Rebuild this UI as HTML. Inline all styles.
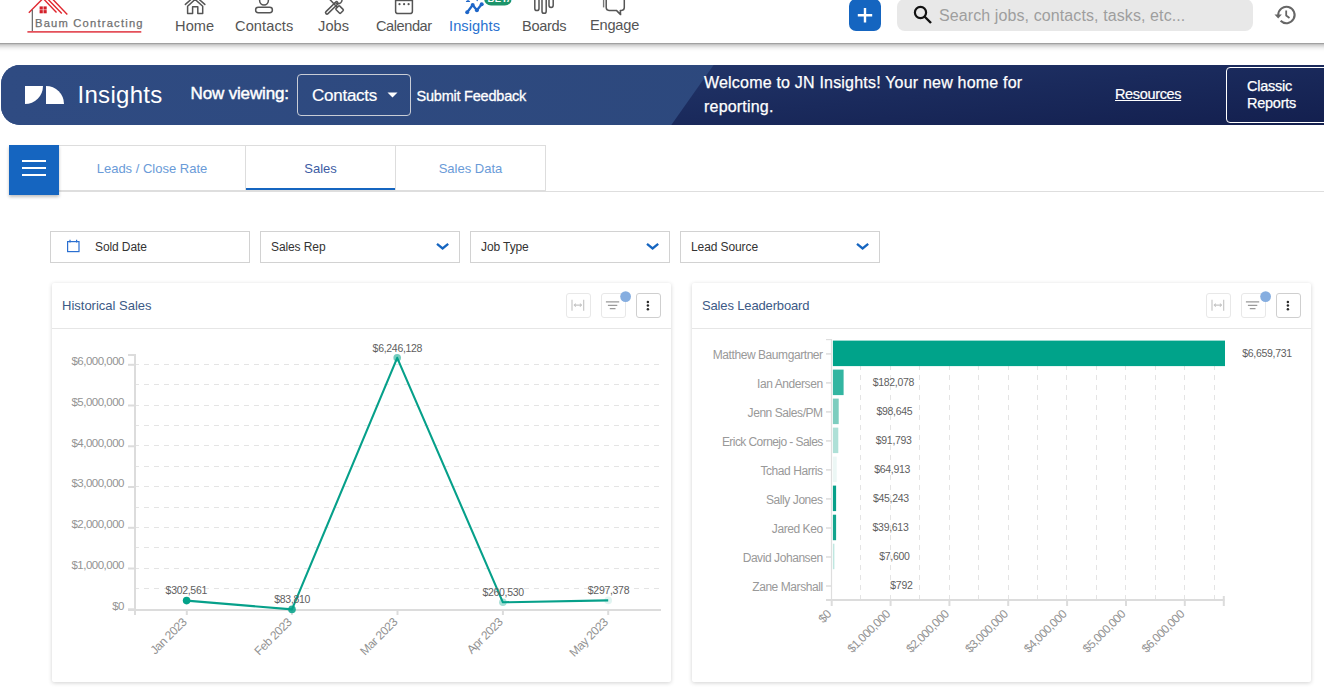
<!DOCTYPE html>
<html><head><meta charset="utf-8">
<style>
*{box-sizing:border-box;margin:0;padding:0}
html,body{width:1324px;height:700px;overflow:hidden;background:#fff;font-family:"Liberation Sans",sans-serif}
.abs{position:absolute}
#hdr{position:absolute;left:0;top:0;width:1324px;height:43px;background:#fff;z-index:5}
#hshadow{position:absolute;left:-20px;top:0;width:1364px;height:43px;background:#fff;box-shadow:0 2px 6px rgba(0,0,0,.38),0 1px 1px rgba(0,0,0,.15);z-index:4}
.nav{position:absolute;top:17.5px;font-size:14.6px;color:#555;white-space:nowrap;letter-spacing:0.1px}
#banner{position:absolute;left:1px;top:65px;width:1340px;height:60px;border-radius:19px 0 0 19px;overflow:hidden;background:linear-gradient(90deg,#2f4b82 0%,#2c467c 100%)}
#tabs{position:absolute;left:0;top:145px;width:1324px;height:47px}
.tab{position:absolute;top:145px;height:46px;border:1px solid #ddd;border-bottom:none;font-size:13px;text-align:center;line-height:46px;color:#6a9bd8}
.filt{position:absolute;top:231px;width:200px;height:32px;border:1px solid #d2d2d2;font-size:12px;color:#333;line-height:31px;padding-left:10px;letter-spacing:-0.1px}
.card{position:absolute;top:283px;height:399px;width:619px;background:#fff;border-radius:2px;box-shadow:0 1px 4px rgba(0,0,0,.18)}
.ctitle{position:absolute;left:10px;top:15px;font-size:13px;color:#3c5a86}
.cdiv{position:absolute;left:0;top:45px;width:100%;height:1px;background:#e6e6e6}
.ib{position:absolute;top:10.3px;width:24.5px;height:24.5px;border:1px solid #e8e8e8;border-radius:3px;background:#fff}
</style></head><body>

<!-- HEADER -->
<div id="hshadow"></div>
<div id="hdr">
  <!-- logo -->
  <svg class="abs" style="left:0;top:0" width="160" height="43" viewBox="0 0 160 43">
    <g stroke="#e0262e" stroke-width="1.4" fill="none">
      <path d="M28.8 12.8 L42.5 -1"/>
      <path d="M43 -1.7 L56.5 12.5"/>
      <path d="M47.2 -1.5 L61.8 13.4"/>
      <path d="M52 -1.5 L67.3 14.6"/>
    </g>
    <g fill="#d4202a"><rect x="39.6" y="6.4" width="3.2" height="3.2"/><rect x="43.5" y="6.4" width="3.2" height="3.2"/><rect x="39.6" y="10.1" width="3.2" height="3.2"/><rect x="43.5" y="10.1" width="3.2" height="3.2"/></g>
    <path d="M32.3 9.8 V31.4" stroke="#555" stroke-width="1.1"/>
    <path d="M27.4 31.9 H141.3" stroke="#e4505a" stroke-width="1.7"/>
    <text x="35" y="26.6" font-size="11.2" fill="#707070" stroke="#707070" stroke-width="0.25" font-family="Liberation Sans" letter-spacing="1.2">Baum Contracting</text>
  </svg>

  <!-- nav icons -->
  <svg class="abs" style="left:0;top:0" width="700" height="43" viewBox="0 0 700 43">
    <g fill="none" stroke="#555" stroke-width="1.5" stroke-linejoin="round" stroke-linecap="round">
      <!-- home -->
      <path d="M185.4 4.4 L195.1 -4.2 L204.8 4.4"/>
      <path d="M187.6 13.5 V6.2 L195.1 -0.6 L202.7 6.2 V13.5 H197.8 V6.8 H192.6 V13.5 Z"/>
      <!-- contacts -->
      <circle cx="264" cy="0.6" r="4.4"/>
      <rect x="255.6" y="7.3" width="16.8" height="5.4" rx="2.7"/>
      <!-- calendar -->
      <rect x="395.6" y="-4" width="16.8" height="17.6" rx="2.4"/>
    </g>
    <!-- jobs -->
    <g stroke-linecap="round" stroke-linejoin="round">
      <path d="M327 12.6 L336.6 3.2" stroke="#555" stroke-width="4.4"/>
      <path d="M327 12.6 L336.6 3.2" stroke="#fff" stroke-width="1.3"/>
      <path d="M335.2 2.5 A3.6 3.6 0 1 0 341 -2.8" fill="none" stroke="#555" stroke-width="1.5"/>
      <path d="M327 -3.5 L336.5 6.5" stroke="#555" stroke-width="1.5"/>
      <rect x="-2.6" y="-3.3" width="5.2" height="6.6" rx="1" transform="translate(339.6 9.6) rotate(-45)" fill="#fff" stroke="#555" stroke-width="1.5"/>
    </g>
    <g fill="#555"><rect x="395.6" y="-4" width="16.8" height="5.2"/><circle cx="399.5" cy="4.2" r="1.1"/><circle cx="404.1" cy="4.2" r="1.1"/><circle cx="408.6" cy="4.2" r="1.1"/></g>
    <!-- insights -->
    <g stroke="#1e66c8" stroke-width="2.3" fill="none" stroke-linecap="round" stroke-linejoin="round">
      <path d="M467.2 12.2 L472.7 5 L476.9 10.3 L481.7 4.2"/>
      <path d="M468 1.3 L468 -2 M466.5 1.3 L469.5 1.3 M477.2 0.5 L477.2 -2" stroke-width="1.3"/>
    </g>
    <g fill="#1e66c8"><circle cx="467.2" cy="12.2" r="2"/><circle cx="472.7" cy="5" r="2"/><circle cx="476.9" cy="10.3" r="2"/><circle cx="481.7" cy="4.2" r="2"/></g>
    <rect x="484.1" y="-9" width="27.7" height="14.6" rx="7" fill="#1c946a"/>
    <text x="487.6" y="1.9" font-size="9.5" font-weight="bold" fill="#fff" font-family="Liberation Sans" letter-spacing="0.3">BETA</text>
    <!-- boards -->
    <g fill="none" stroke="#555" stroke-width="1.5">
      <rect x="534.8" y="-4" width="4.2" height="14.5" rx="2.1"/>
      <rect x="542" y="-4" width="4.2" height="17.3" rx="2.1"/>
      <rect x="549" y="-4" width="4.2" height="11.4" rx="2.1"/>
    </g>
    <!-- engage -->
    <g fill="none" stroke="#555" stroke-width="1.5" stroke-linejoin="round">
      <path d="M609 -3 H621.5 Q624.3 -3 624.3 0 V7.6 Q624.3 10.4 621.5 10.4 L620.3 10.4 L620.6 14.6 L616.4 10.4 H609 Q606.2 10.4 606.2 7.6 V0 Q606.2 -3 609 -3 Z"/>
      <path d="M603.6 -1 V7.4" stroke-width="1.4" stroke="#777"/>
    </g>
  </svg>
  <div class="nav" style="left:175px">Home</div>
  <div class="nav" style="left:235px">Contacts</div>
  <div class="nav" style="left:318px">Jobs</div>
  <div class="nav" style="left:376px;letter-spacing:-0.45px">Calendar</div>
  <div class="nav" style="left:449px;color:#2a72d0">Insights</div>
  <div class="nav" style="left:522px;letter-spacing:-0.35px">Boards</div>
  <div class="nav" style="left:590px;top:16.8px;letter-spacing:-0.2px">Engage</div>

  <!-- plus -->
  <div class="abs" style="left:849px;top:-1px;width:32px;height:32px;border-radius:7px;background:#1565c0"></div>
  <svg class="abs" style="left:849px;top:0" width="32" height="31"><path d="M16 8 V22.5 M8.8 15.2 H23.2" stroke="#fff" stroke-width="2.4"/></svg>
  <!-- search -->
  <div class="abs" style="left:897px;top:-1px;width:356px;height:32px;border-radius:8px;background:#e8e8e8"></div>
  <svg class="abs" style="left:912px;top:4px" width="22" height="22" viewBox="0 0 22 22"><circle cx="8.5" cy="8.5" r="5.6" fill="none" stroke="#111" stroke-width="2.2"/><path d="M12.5 12.5 L19 19" stroke="#111" stroke-width="2.4"/></svg>
  <div class="abs" style="left:939px;top:7px;font-size:16px;color:#9e9e9e;white-space:nowrap;letter-spacing:0.1px">Search jobs, contacts, tasks, etc...</div>
  <!-- history -->
  <svg class="abs" style="left:1272px;top:4px" width="26" height="22" viewBox="0 0 26 22">
    <path d="M6.2 11 A8.2 8.2 0 1 1 8.6 16.8" fill="none" stroke="#666" stroke-width="2"/>
    <path d="M2.5 10.5 L6.2 14.6 L9.8 10.5 Z" fill="#666"/>
    <path d="M14.2 6.5 V11.5 L17.5 14" fill="none" stroke="#666" stroke-width="1.8"/>
  </svg>
</div>

<!-- BANNER -->
<div id="banner">
  <svg class="abs" style="left:0;top:0" width="1340" height="60">
    <defs>
      <linearGradient id="g1" x1="0" y1="0" x2="1" y2="0">
        <stop offset="0" stop-color="#2f4b82"/><stop offset="1" stop-color="#2b4679"/>
      </linearGradient>
      <linearGradient id="g2" x1="0" y1="0" x2="1" y2="1">
        <stop offset="0" stop-color="#213468"/><stop offset="0.45" stop-color="#1a2a5c"/><stop offset="1" stop-color="#131f4e"/>
      </linearGradient>
    </defs>
    <rect x="0" y="0" width="1340" height="60" fill="url(#g1)"/>
    <path d="M712.6 0 H1340 V60 H670.3 Z" fill="url(#g2)"/>
  </svg>
  <!-- logo shapes -->
  <svg class="abs" style="left:24px;top:21px" width="40" height="18" viewBox="0 0 40 18">
    <path d="M0 0 H18 A18 18 0 0 1 0 18 Z" fill="#fff"/>
    <path d="M21 0 A18 18 0 0 1 39 18 H21 Z" fill="#fff"/>
  </svg>
  <div class="abs" style="left:76.5px;top:15.5px;font-size:24px;color:#fff;letter-spacing:0.3px">Insights</div>
  <div class="abs" style="left:189.5px;top:19px;font-size:17px;color:#fff;letter-spacing:-0.15px;-webkit-text-stroke:0.45px #fff">Now viewing:</div>
  <div class="abs" style="left:296px;top:9px;width:114px;height:42px;border:1px solid #c9cdd6;border-radius:4px"></div>
  <div class="abs" style="left:311px;top:21px;font-size:17px;color:#fff;letter-spacing:-0.25px;-webkit-text-stroke:0.2px #fff">Contacts</div>
  <svg class="abs" style="left:386px;top:27px" width="12" height="8"><path d="M0.5 0.5 H10.5 L5.5 5.5 Z" fill="#fff"/></svg>
  <div class="abs" style="left:415.5px;top:23px;font-size:14.5px;color:#fff;letter-spacing:-0.22px;-webkit-text-stroke:0.3px #fff">Submit Feedback</div>
  <div class="abs" style="left:703px;top:6px;font-size:16px;line-height:24px;color:#fff;width:348px;letter-spacing:0.2px;-webkit-text-stroke:0.25px #fff">Welcome to JN Insights! Your new home for reporting.</div>
  <div class="abs" style="left:1114px;top:21px;font-size:14.5px;color:#fff;text-decoration:underline;letter-spacing:-0.35px;-webkit-text-stroke:0.2px #fff">Resources</div>
  <div class="abs" style="left:1225px;top:2px;width:120px;height:56px;border:1px solid #fff;border-radius:4px"></div>
  <div class="abs" style="left:1246px;top:13px;font-size:14.5px;line-height:17px;color:#fff;letter-spacing:-0.25px;-webkit-text-stroke:0.25px #fff">Classic<br>Reports</div>
</div>

<!-- TABS -->
<div class="abs" style="left:59px;top:190px;width:487px;height:2px;background:#dedede"></div>
<div class="abs" style="left:546px;top:191px;width:778px;height:1px;background:#dedede"></div>
<div class="tab" style="left:58px;width:188px">Leads / Close Rate</div>
<div class="tab" style="left:245px;width:151px;color:#3d5ca4">Sales</div>
<div class="abs" style="left:246px;top:188px;width:149px;height:2.2px;background:#1565c0"></div>
<div class="tab" style="left:395px;width:151px">Sales Data</div>
<div class="abs" style="left:9px;top:145px;width:50px;height:50px;background:#1565c0;box-shadow:0 2px 3px rgba(0,0,0,.25)"></div>
<svg class="abs" style="left:9px;top:145px" width="50" height="50"><path d="M13 16 H37 M13 23 H37 M13 30 H37" stroke="#fff" stroke-width="2.2"/></svg>

<!-- FILTERS -->
<div class="filt" style="left:50px;padding-left:44px">Sold Date</div>
<svg class="abs" style="left:66px;top:239px" width="15" height="14" viewBox="0 0 15 14"><rect x="1.6" y="2.6" width="11.4" height="10" fill="none" stroke="#2a6fd0" stroke-width="1.2"/><path d="M4 0.8 V3.5 M10.6 0.8 V3.5" stroke="#2a6fd0" stroke-width="1.2"/></svg>
<div class="filt" style="left:260px">Sales Rep</div>
<div class="filt" style="left:470px">Job Type</div>
<div class="filt" style="left:680px">Lead Source</div>
<svg class="abs" style="left:0;top:0" width="900" height="270">
  <g fill="none" stroke="#1565c0" stroke-width="2.3">
    <path d="M437 243.8 L442.6 248.4 L448.2 243.8"/>
    <path d="M647 243.8 L652.6 248.4 L658.2 243.8"/>
    <path d="M857 243.8 L862.6 248.4 L868.2 243.8"/>
  </g>
</svg>

<!-- CARDS -->
<div class="card" style="left:52px">
  <div class="ctitle">Historical Sales</div>
  <div class="ib" style="left:514.3px"></div>
  <div class="ib" style="left:549.4px"></div>
  <div class="ib" style="left:584.4px;border-color:#cfcfcf"></div>
  <svg class="abs" style="left:0;top:0" width="619" height="46">
    <g stroke="#c4c4c4" stroke-width="1.1" fill="none">
      <path d="M520 16.8 V27.8 M531.7 16.8 V27.8 M522.3 22.1 H529.4"/>
      <path d="M523.8 20.6 L522.3 22.1 L523.8 23.6 M527.9 20.6 L529.4 22.1 L527.9 23.6"/>
    </g>
    <g stroke="#9a9a9a" stroke-width="1.2">
      <path d="M553.9 18.8 H567.2 M555.9 22.4 H565.3 M557.8 25.6 H563.5"/>
    </g>
    <circle cx="573.6" cy="13.6" r="5.4" fill="#86aee0"/>
    <g fill="#2a2a2a"><circle cx="595.9" cy="19" r="1.25"/><circle cx="595.9" cy="22.6" r="1.25"/><circle cx="595.9" cy="26.2" r="1.25"/></g>
  </svg>
  <div class="cdiv"></div>
</div>
<div class="card" style="left:692px">
  <div class="ctitle" style="letter-spacing:-0.15px">Sales Leaderboard</div>
  <div class="ib" style="left:514.3px"></div>
  <div class="ib" style="left:549.4px"></div>
  <div class="ib" style="left:584.4px;border-color:#cfcfcf"></div>
  <svg class="abs" style="left:0;top:0" width="619" height="46">
    <g stroke="#c4c4c4" stroke-width="1.1" fill="none">
      <path d="M520 16.8 V27.8 M531.7 16.8 V27.8 M522.3 22.1 H529.4"/>
      <path d="M523.8 20.6 L522.3 22.1 L523.8 23.6 M527.9 20.6 L529.4 22.1 L527.9 23.6"/>
    </g>
    <g stroke="#9a9a9a" stroke-width="1.2">
      <path d="M553.9 18.8 H567.2 M555.9 22.4 H565.3 M557.8 25.6 H563.5"/>
    </g>
    <circle cx="573.6" cy="13.6" r="5.4" fill="#86aee0"/>
    <g fill="#2a2a2a"><circle cx="595.9" cy="19" r="1.25"/><circle cx="595.9" cy="22.6" r="1.25"/><circle cx="595.9" cy="26.2" r="1.25"/></g>
  </svg>
  <div class="cdiv"></div>
</div>

<!--CHARTS-->
<svg class="abs" style="left:0;top:0;z-index:2" width="1324" height="700">
<path d="M134 588.5 H660" stroke="#e4e4e4" stroke-width="1" stroke-dasharray="5 5"/>
<path d="M134 568.5 H660" stroke="#e4e4e4" stroke-width="1" stroke-dasharray="5 5"/>
<path d="M134 547.5 H660" stroke="#e4e4e4" stroke-width="1" stroke-dasharray="5 5"/>
<path d="M134 527.5 H660" stroke="#e4e4e4" stroke-width="1" stroke-dasharray="5 5"/>
<path d="M134 507.5 H660" stroke="#e4e4e4" stroke-width="1" stroke-dasharray="5 5"/>
<path d="M134 486.5 H660" stroke="#e4e4e4" stroke-width="1" stroke-dasharray="5 5"/>
<path d="M134 466.5 H660" stroke="#e4e4e4" stroke-width="1" stroke-dasharray="5 5"/>
<path d="M134 445.5 H660" stroke="#e4e4e4" stroke-width="1" stroke-dasharray="5 5"/>
<path d="M134 425.5 H660" stroke="#e4e4e4" stroke-width="1" stroke-dasharray="5 5"/>
<path d="M134 405.5 H660" stroke="#e4e4e4" stroke-width="1" stroke-dasharray="5 5"/>
<path d="M134 384.5 H660" stroke="#e4e4e4" stroke-width="1" stroke-dasharray="5 5"/>
<path d="M134 364.5 H660" stroke="#e4e4e4" stroke-width="1" stroke-dasharray="5 5"/>
<path d="M135 354 V611" stroke="#dcdcdc" stroke-width="2"/>
<path d="M128 355 H136" stroke="#dcdcdc" stroke-width="2"/>
<path d="M128 609.3 H135" stroke="#dcdcdc" stroke-width="2"/>
<text x="124" y="609.5" text-anchor="end" font-size="11.5" fill="#939393" letter-spacing="-0.5" font-family="Liberation Sans">$0</text>
<path d="M128 568.5 H135" stroke="#dcdcdc" stroke-width="2"/>
<text x="124" y="568.8" text-anchor="end" font-size="11.5" fill="#939393" letter-spacing="-0.5" font-family="Liberation Sans">$1,000,000</text>
<path d="M128 527.8 H135" stroke="#dcdcdc" stroke-width="2"/>
<text x="124" y="528.0" text-anchor="end" font-size="11.5" fill="#939393" letter-spacing="-0.5" font-family="Liberation Sans">$2,000,000</text>
<path d="M128 487.0 H135" stroke="#dcdcdc" stroke-width="2"/>
<text x="124" y="487.2" text-anchor="end" font-size="11.5" fill="#939393" letter-spacing="-0.5" font-family="Liberation Sans">$3,000,000</text>
<path d="M128 446.3 H135" stroke="#dcdcdc" stroke-width="2"/>
<text x="124" y="446.5" text-anchor="end" font-size="11.5" fill="#939393" letter-spacing="-0.5" font-family="Liberation Sans">$4,000,000</text>
<path d="M128 405.5 H135" stroke="#dcdcdc" stroke-width="2"/>
<text x="124" y="405.7" text-anchor="end" font-size="11.5" fill="#939393" letter-spacing="-0.5" font-family="Liberation Sans">$5,000,000</text>
<path d="M128 364.8 H135" stroke="#dcdcdc" stroke-width="2"/>
<text x="124" y="365.0" text-anchor="end" font-size="11.5" fill="#939393" letter-spacing="-0.5" font-family="Liberation Sans">$6,000,000</text>
<path d="M128 610 H661" stroke="#dcdcdc" stroke-width="2"/>
<path d="M135 610 V615" stroke="#dcdcdc" stroke-width="2"/>
<path d="M186.8 610 V615" stroke="#dcdcdc" stroke-width="2"/>
<path d="M291.9 610 V615" stroke="#dcdcdc" stroke-width="2"/>
<path d="M397.5 610 V615" stroke="#dcdcdc" stroke-width="2"/>
<path d="M502.9 610 V615" stroke="#dcdcdc" stroke-width="2"/>
<path d="M608.2 610 V615" stroke="#dcdcdc" stroke-width="2"/>
<text x="187.3" y="623" text-anchor="end" font-size="12" fill="#939393" letter-spacing="-0.5" transform="rotate(-45 187.3 623)" font-family="Liberation Sans">Jan 2023</text>
<text x="292.4" y="623" text-anchor="end" font-size="12" fill="#939393" letter-spacing="-0.5" transform="rotate(-45 292.4 623)" font-family="Liberation Sans">Feb 2023</text>
<text x="398.0" y="623" text-anchor="end" font-size="12" fill="#939393" letter-spacing="-0.5" transform="rotate(-45 398.0 623)" font-family="Liberation Sans">Mar 2023</text>
<text x="503.4" y="623" text-anchor="end" font-size="12" fill="#939393" letter-spacing="-0.5" transform="rotate(-45 503.4 623)" font-family="Liberation Sans">Apr 2023</text>
<text x="608.7" y="623" text-anchor="end" font-size="12" fill="#939393" letter-spacing="-0.5" transform="rotate(-45 608.7 623)" font-family="Liberation Sans">May 2023</text>
<path d="M186.6 600.6 L292 609.4 L397.2 357.8 L502.9 602.3 L608.2 600.4" fill="none" stroke="#06a08a" stroke-width="2.1" stroke-linejoin="round"/>
<circle cx="186.6" cy="600.6" r="3.8" fill="#03a289" fill-opacity="1"/>
<circle cx="292" cy="609.4" r="3.8" fill="#03a289" fill-opacity="0.85"/>
<circle cx="397.2" cy="357.8" r="3.8" fill="#03a289" fill-opacity="0.55"/>
<circle cx="502.9" cy="602.3" r="3.8" fill="#03a289" fill-opacity="0.35"/>
<circle cx="608.2" cy="600.4" r="3.8" fill="#03a289" fill-opacity="0.12"/>
<text x="186.3" y="594.2" text-anchor="middle" font-size="10.5" fill="#606060" letter-spacing="-0.3" font-family="Liberation Sans">$302,561</text>
<text x="292.2" y="603" text-anchor="middle" font-size="10.5" fill="#606060" letter-spacing="-0.3" font-family="Liberation Sans">$83,810</text>
<text x="397.4" y="351.7" text-anchor="middle" font-size="10.5" fill="#606060" letter-spacing="-0.3" font-family="Liberation Sans">$6,246,128</text>
<text x="503.1" y="595.5" text-anchor="middle" font-size="10.5" fill="#606060" letter-spacing="-0.3" font-family="Liberation Sans">$260,530</text>
<text x="608.5" y="594.2" text-anchor="middle" font-size="10.5" fill="#606060" letter-spacing="-0.3" font-family="Liberation Sans">$297,378</text>
<path d="M860.5 345 V600" stroke="#e4e4e4" stroke-width="1" stroke-dasharray="5 5"/>
<path d="M890.5 345 V600" stroke="#e4e4e4" stroke-width="1" stroke-dasharray="5 5"/>
<path d="M919.5 345 V600" stroke="#e4e4e4" stroke-width="1" stroke-dasharray="5 5"/>
<path d="M949.5 345 V600" stroke="#e4e4e4" stroke-width="1" stroke-dasharray="5 5"/>
<path d="M978.5 345 V600" stroke="#e4e4e4" stroke-width="1" stroke-dasharray="5 5"/>
<path d="M1008.5 345 V600" stroke="#e4e4e4" stroke-width="1" stroke-dasharray="5 5"/>
<path d="M1037.5 345 V600" stroke="#e4e4e4" stroke-width="1" stroke-dasharray="5 5"/>
<path d="M1066.5 345 V600" stroke="#e4e4e4" stroke-width="1" stroke-dasharray="5 5"/>
<path d="M1096.5 345 V600" stroke="#e4e4e4" stroke-width="1" stroke-dasharray="5 5"/>
<path d="M1125.5 345 V600" stroke="#e4e4e4" stroke-width="1" stroke-dasharray="5 5"/>
<path d="M1155.5 345 V600" stroke="#e4e4e4" stroke-width="1" stroke-dasharray="5 5"/>
<path d="M1184.5 345 V600" stroke="#e4e4e4" stroke-width="1" stroke-dasharray="5 5"/>
<path d="M1214.5 345 V600" stroke="#e4e4e4" stroke-width="1" stroke-dasharray="5 5"/>
<path d="M831.5 339 V601" stroke="#dedede" stroke-width="1.2"/>
<path d="M826 339.6 H832" stroke="#dedede" stroke-width="1.2"/>
<path d="M826 600 H1224.5" stroke="#dcdcdc" stroke-width="2"/>
<path d="M1223.8 596 V606" stroke="#dcdcdc" stroke-width="2"/>
<path d="M831.7 600 V606" stroke="#dcdcdc" stroke-width="2"/>
<text x="831.9" y="615" text-anchor="end" font-size="12" fill="#939393" letter-spacing="-0.55" transform="rotate(-45 831.9 615)" font-family="Liberation Sans">$0</text>
<path d="M890.6 600 V606" stroke="#dcdcdc" stroke-width="2"/>
<text x="890.8" y="615" text-anchor="end" font-size="12" fill="#939393" letter-spacing="-0.55" transform="rotate(-45 890.8 615)" font-family="Liberation Sans">$1,000,000</text>
<path d="M949.4 600 V606" stroke="#dcdcdc" stroke-width="2"/>
<text x="949.6" y="615" text-anchor="end" font-size="12" fill="#939393" letter-spacing="-0.55" transform="rotate(-45 949.6 615)" font-family="Liberation Sans">$2,000,000</text>
<path d="M1008.2 600 V606" stroke="#dcdcdc" stroke-width="2"/>
<text x="1008.5" y="615" text-anchor="end" font-size="12" fill="#939393" letter-spacing="-0.55" transform="rotate(-45 1008.5 615)" font-family="Liberation Sans">$3,000,000</text>
<path d="M1067.1 600 V606" stroke="#dcdcdc" stroke-width="2"/>
<text x="1067.3" y="615" text-anchor="end" font-size="12" fill="#939393" letter-spacing="-0.55" transform="rotate(-45 1067.3 615)" font-family="Liberation Sans">$4,000,000</text>
<path d="M1126.0 600 V606" stroke="#dcdcdc" stroke-width="2"/>
<text x="1126.2" y="615" text-anchor="end" font-size="12" fill="#939393" letter-spacing="-0.55" transform="rotate(-45 1126.2 615)" font-family="Liberation Sans">$5,000,000</text>
<path d="M1184.8 600 V606" stroke="#dcdcdc" stroke-width="2"/>
<text x="1185.0" y="615" text-anchor="end" font-size="12" fill="#939393" letter-spacing="-0.55" transform="rotate(-45 1185.0 615)" font-family="Liberation Sans">$6,000,000</text>
<path d="M826 353.9 H831" stroke="#dcdcdc" stroke-width="1.5"/>
<text x="822.7" y="358.9" text-anchor="end" font-size="12" fill="#999" letter-spacing="-0.43" font-family="Liberation Sans">Matthew Baumgartner</text>
<rect x="832.9" y="340.6" width="392.1" height="25.5" fill="#00a38a"/>
<text x="1267.0" y="356.8" text-anchor="middle" font-size="10.5" fill="#606060" letter-spacing="-0.3" font-family="Liberation Sans">$6,659,731</text>
<path d="M826 382.9 H831" stroke="#dcdcdc" stroke-width="1.5"/>
<text x="822.7" y="387.9" text-anchor="end" font-size="12" fill="#999" letter-spacing="-0.43" font-family="Liberation Sans">Ian Andersen</text>
<rect x="832.9" y="369.6" width="10.7" height="25.5" fill="#33b5a1"/>
<text x="893.4" y="385.8" text-anchor="middle" font-size="10.5" fill="#606060" letter-spacing="-0.3" font-family="Liberation Sans">$182,078</text>
<path d="M826 411.9 H831" stroke="#dcdcdc" stroke-width="1.5"/>
<text x="822.7" y="416.9" text-anchor="end" font-size="12" fill="#999" letter-spacing="-0.43" font-family="Liberation Sans">Jenn Sales/PM</text>
<rect x="832.9" y="398.6" width="5.8" height="25.5" fill="#7dcdbf"/>
<text x="894.4" y="414.8" text-anchor="middle" font-size="10.5" fill="#606060" letter-spacing="-0.3" font-family="Liberation Sans">$98,645</text>
<path d="M826 440.9 H831" stroke="#dcdcdc" stroke-width="1.5"/>
<text x="822.7" y="445.9" text-anchor="end" font-size="12" fill="#999" letter-spacing="-0.57" font-family="Liberation Sans">Erick Cornejo - Sales</text>
<rect x="832.9" y="427.6" width="5.4" height="25.5" fill="#aee0d7"/>
<text x="893.7" y="443.8" text-anchor="middle" font-size="10.5" fill="#606060" letter-spacing="-0.3" font-family="Liberation Sans">$91,793</text>
<path d="M826 469.9 H831" stroke="#dcdcdc" stroke-width="1.5"/>
<text x="822.7" y="474.9" text-anchor="end" font-size="12" fill="#999" letter-spacing="-0.43" font-family="Liberation Sans">Tchad Harris</text>
<rect x="832.9" y="456.6" width="3.8" height="25.5" fill="#ecf7f5"/>
<text x="892.1" y="472.8" text-anchor="middle" font-size="10.5" fill="#606060" letter-spacing="-0.3" font-family="Liberation Sans">$64,913</text>
<path d="M826 498.9 H831" stroke="#dcdcdc" stroke-width="1.5"/>
<text x="822.7" y="503.9" text-anchor="end" font-size="12" fill="#999" letter-spacing="-0.43" font-family="Liberation Sans">Sally Jones</text>
<rect x="832.9" y="485.6" width="3.2" height="25.5" fill="#07a089"/>
<text x="890.9" y="501.8" text-anchor="middle" font-size="10.5" fill="#606060" letter-spacing="-0.3" font-family="Liberation Sans">$45,243</text>
<path d="M826 528.0 H831" stroke="#dcdcdc" stroke-width="1.5"/>
<text x="822.7" y="533.0" text-anchor="end" font-size="12" fill="#999" letter-spacing="-0.43" font-family="Liberation Sans">Jared Keo</text>
<rect x="832.9" y="514.7" width="3.2" height="25.5" fill="#12a48d"/>
<text x="890.5" y="530.9" text-anchor="middle" font-size="10.5" fill="#606060" letter-spacing="-0.3" font-family="Liberation Sans">$39,613</text>
<path d="M826 557.0 H831" stroke="#dcdcdc" stroke-width="1.5"/>
<text x="822.7" y="562.0" text-anchor="end" font-size="12" fill="#999" letter-spacing="-0.43" font-family="Liberation Sans">David Johansen</text>
<rect x="832.9" y="543.7" width="1.5" height="25.5" fill="#bfe7e0"/>
<text x="894.4" y="559.9" text-anchor="middle" font-size="10.5" fill="#606060" letter-spacing="-0.3" font-family="Liberation Sans">$7,600</text>
<path d="M826 586.0 H831" stroke="#dcdcdc" stroke-width="1.5"/>
<text x="822.7" y="591.0" text-anchor="end" font-size="12" fill="#999" letter-spacing="-0.43" font-family="Liberation Sans">Zane Marshall</text>
<text x="901.4" y="588.9" text-anchor="middle" font-size="10.5" fill="#606060" letter-spacing="-0.3" font-family="Liberation Sans">$792</text>
</svg>
<!--/CHARTS-->
</body></html>
